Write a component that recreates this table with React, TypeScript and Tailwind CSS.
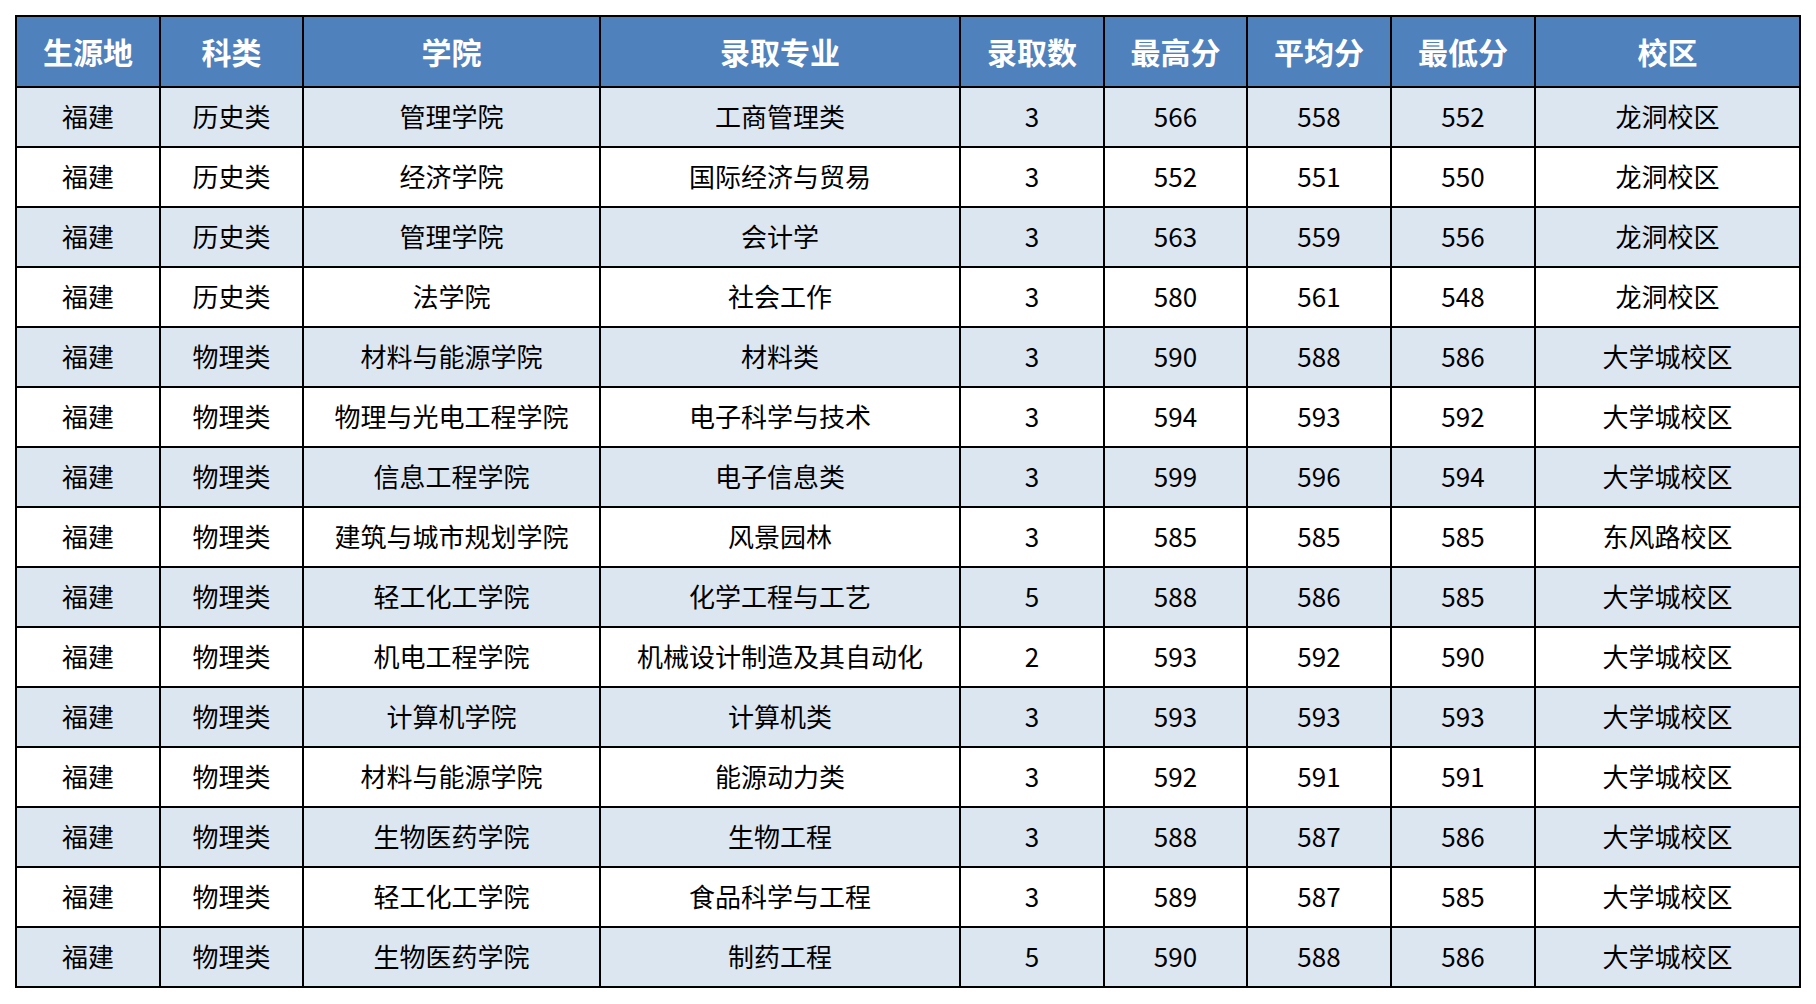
const headers = ["生源地", "科类", "学院", "录取专业", "录取数", "最高分", "平均分", "最低分", "校区"]

const rows = [
  ["福建", "历史类", "管理学院", "工商管理类", "3", "566", "558", "552", "龙洞校区"],
  ["福建", "历史类", "经济学院", "国际经济与贸易", "3", "552", "551", "550", "龙洞校区"],
  ["福建", "历史类", "管理学院", "会计学", "3", "563", "559", "556", "龙洞校区"],
  ["福建", "历史类", "法学院", "社会工作", "3", "580", "561", "548", "龙洞校区"],
  ["福建", "物理类", "材料与能源学院", "材料类", "3", "590", "588", "586", "大学城校区"],
  ["福建", "物理类", "物理与光电工程学院", "电子科学与技术", "3", "594", "593", "592", "大学城校区"],
  ["福建", "物理类", "信息工程学院", "电子信息类", "3", "599", "596", "594", "大学城校区"],
  ["福建", "物理类", "建筑与城市规划学院", "风景园林", "3", "585", "585", "585", "东风路校区"],
  ["福建", "物理类", "轻工化工学院", "化学工程与工艺", "5", "588", "586", "585", "大学城校区"],
  ["福建", "物理类", "机电工程学院", "机械设计制造及其自动化", "2", "593", "592", "590", "大学城校区"],
  ["福建", "物理类", "计算机学院", "计算机类", "3", "593", "593", "593", "大学城校区"],
  ["福建", "物理类", "材料与能源学院", "能源动力类", "3", "592", "591", "591", "大学城校区"],
  ["福建", "物理类", "生物医药学院", "生物工程", "3", "588", "587", "586", "大学城校区"],
  ["福建", "物理类", "轻工化工学院", "食品科学与工程", "3", "589", "587", "585", "大学城校区"],
  ["福建", "物理类", "生物医药学院", "制药工程", "5", "590", "588", "586", "大学城校区"],
]

export default function App() {
  return (
    <div
      className="w-[1816px] h-[1004px] bg-white pt-[15px] pl-[15px]"
      style={{ fontFamily: '"Noto Sans CJK SC", "Microsoft YaHei", "Noto Sans", sans-serif' }}
    >
      <div className="inline-grid bg-black p-[2px] gap-[2px] grid-cols-[142px_141px_295px_358px_142px_141px_142px_142px_263px] grid-rows-[69px_repeat(15,58px)]">
        {headers.map((h) => (
          <div
            key={h}
            className="bg-[#4f81bd] flex items-center justify-center pb-[2px] text-white text-[30px] font-bold leading-none"
          >
            {h}
          </div>
        ))}
        {rows.map((row, i) =>
          row.map((cell, j) => (
            <div
              key={`${i}-${j}`}
              className={
                "flex items-center justify-center pb-[2px] text-black text-[26px] leading-none " +
                (i % 2 === 0 ? "bg-[#dce6f1]" : "bg-white")
              }
            >
              {cell}
            </div>
          ))
        )}
      </div>
    </div>
  )
}
